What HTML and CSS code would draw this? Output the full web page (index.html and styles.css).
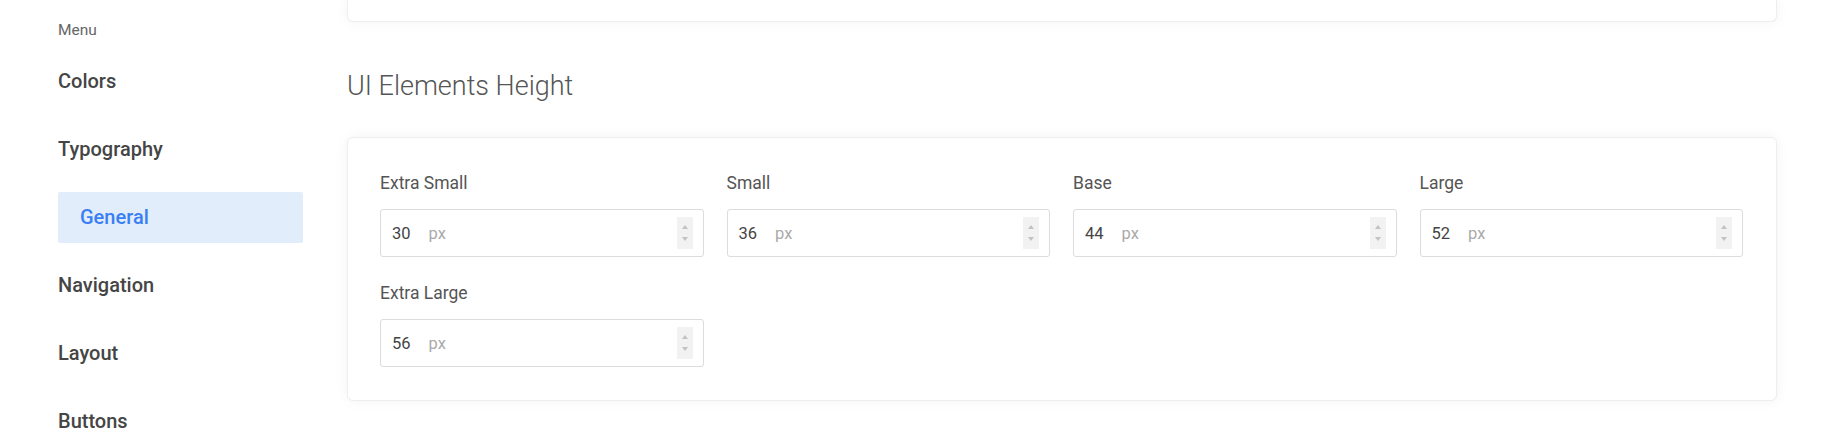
FILE: index.html
```html
<!DOCTYPE html>
<html lang="en">
<head>
<meta charset="utf-8">
<title>UI Elements Height</title>
<link rel="stylesheet" href="styles.css">
</head>
<body>
<div class="page">
  <aside class="sidebar">
    <div class="menu-title">Menu</div>
    <nav class="nav">
      <a class="nav-item">Colors</a>
      <a class="nav-item">Typography</a>
      <a class="nav-item active">General</a>
      <a class="nav-item">Navigation</a>
      <a class="nav-item">Layout</a>
      <a class="nav-item">Buttons</a>
    </nav>
  </aside>
  <main class="main">
    <div class="top-card"></div>
    <h2 class="section-title">UI Elements Height</h2>
    <section class="card">
      <div class="grid">
        <div class="field">
          <div class="label">Extra Small</div>
          <div class="input"><span class="value">30</span><span class="unit">px</span><span class="spinner"><i class="up"></i><i class="down"></i></span></div>
        </div>
        <div class="field">
          <div class="label">Small</div>
          <div class="input"><span class="value">36</span><span class="unit">px</span><span class="spinner"><i class="up"></i><i class="down"></i></span></div>
        </div>
        <div class="field">
          <div class="label">Base</div>
          <div class="input"><span class="value">44</span><span class="unit">px</span><span class="spinner"><i class="up"></i><i class="down"></i></span></div>
        </div>
        <div class="field">
          <div class="label">Large</div>
          <div class="input"><span class="value">52</span><span class="unit">px</span><span class="spinner"><i class="up"></i><i class="down"></i></span></div>
        </div>
        <div class="field">
          <div class="label">Extra Large</div>
          <div class="input"><span class="value">56</span><span class="unit">px</span><span class="spinner"><i class="up"></i><i class="down"></i></span></div>
        </div>
      </div>
    </section>
  </main>
</div>
</body>
</html>
```

FILE: styles.css
```css
* { box-sizing: border-box; }
html, body { margin: 0; padding: 0; background: #fff; }
body {
  font-family: Roboto, "Liberation Sans", Arial, sans-serif;
  color: #444;
  overflow: hidden;
}
.page {
  display: flex;
  gap: 44px;
  padding: 0 63px 0 58px;
}
.sidebar {
  width: 245px;
  flex: none;
  padding-top: 22px;
  display: flex;
  flex-direction: column;
}
.menu-title {
  font-size: 15.5px;
  line-height: 16px;
  color: #666;
  margin-bottom: 17.5px;
}
.nav {
  display: flex;
  flex-direction: column;
  gap: 17px;
}
.nav-item {
  height: 51px;
  display: flex;
  align-items: center;
  font-size: 20px;
  font-weight: 500;
  color: #454545;
}
.nav-item.active {
  background: #e2edfc;
  color: #3a7ff2;
  padding-left: 22px;
  border-radius: 2px;
}
.main {
  flex: 1;
  min-width: 0;
}
.top-card {
  height: 22px;
  background: #fff;
  border: 1px solid #eeeeee;
  border-top: none;
  border-radius: 0 0 6px 6px;
  box-shadow: 0 0 14px rgba(0, 0, 0, 0.05);
}
.section-title {
  margin: 50px 0 37px;
  font-size: 27px;
  line-height: 28px;
  font-weight: 300;
  color: #555;
}
.card {
  background: #fff;
  border: 1px solid #eeeeee;
  border-radius: 6px;
  box-shadow: 0 0 14px rgba(0, 0, 0, 0.05);
  padding: 33px 33px 33px 32px;
}
.grid {
  display: grid;
  grid-template-columns: repeat(4, 1fr);
  column-gap: 23px;
  row-gap: 24px;
}
.label {
  font-size: 17.5px;
  line-height: 24px;
  color: #555;
  margin-bottom: 14px;
}
.input {
  height: 48px;
  border: 1px solid #dcdcdc;
  border-radius: 3px;
  display: flex;
  align-items: center;
  padding: 0 10px 0 11px;
}
.value {
  font-size: 16.5px;
  color: #444;
  margin-right: 18px;
}
.unit {
  font-size: 16.5px;
  color: #aaa;
}
.spinner {
  margin-left: auto;
  width: 16px;
  height: 32px;
  background: #f2f2f2;
  display: flex;
  flex-direction: column;
  justify-content: space-evenly;
  align-items: center;
}
.spinner i {
  display: block;
  width: 0;
  height: 0;
  border-left: 3px solid transparent;
  border-right: 3px solid transparent;
}
.spinner .up { border-bottom: 4px solid #c2c2c2; }
.spinner .down { border-top: 4px solid #c2c2c2; }
```
